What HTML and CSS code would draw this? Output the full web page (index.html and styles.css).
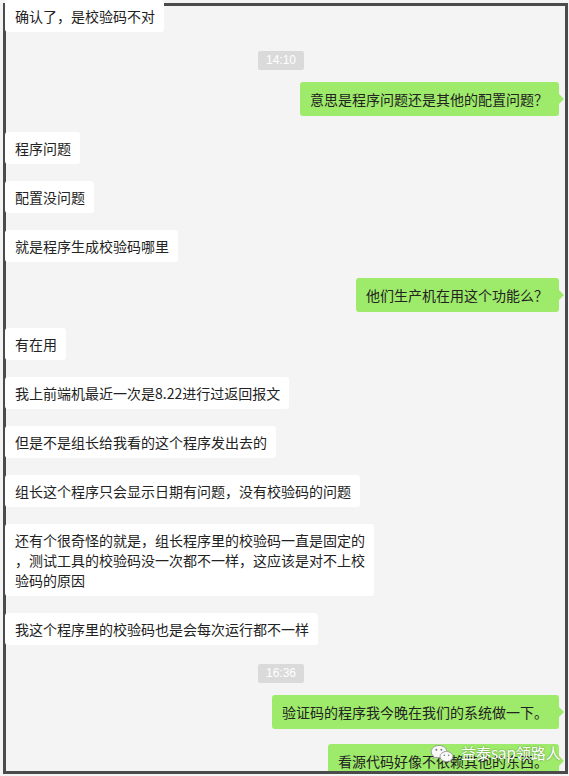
FILE: index.html
```html
<!DOCTYPE html>
<html lang="zh-CN">
<head>
    <meta charset="UTF-8">
    <meta name="viewport" content="width=device-width, initial-scale=1.0">
    <title>聊天记录</title>
    <link rel="stylesheet" href="styles.css">
</head>
<body>
    <div class="frame">
        <div class="messages">
            <div class="msg"><div class="bubble">确认了，是校验码不对</div></div>
            <div class="time"><span>14:10</span></div>
            <div class="msg me"><div class="bubble">意思是程序问题还是其他的配置问题？</div></div>
            <div class="msg"><div class="bubble">程序问题</div></div>
            <div class="msg"><div class="bubble">配置没问题</div></div>
            <div class="msg"><div class="bubble">就是程序生成校验码哪里</div></div>
            <div class="msg me"><div class="bubble">他们生产机在用这个功能么？</div></div>
            <div class="msg"><div class="bubble">有在用</div></div>
            <div class="msg"><div class="bubble">我上前端机最近一次是8.22进行过返回报文</div></div>
            <div class="msg"><div class="bubble">但是不是组长给我看的这个程序发出去的</div></div>
            <div class="msg"><div class="bubble">组长这个程序只会显示日期有问题，没有校验码的问题</div></div>
            <div class="msg"><div class="bubble">还有个很奇怪的就是，组长程序里的校验码一直是固定的<br>，测试工具的校验码没一次都不一样，这应该是对不上校<br>验码的原因</div></div>
            <div class="msg"><div class="bubble">我这个程序里的校验码也是会每次运行都不一样</div></div>
            <div class="time"><span>16:36</span></div>
            <div class="msg me"><div class="bubble">验证码的程序我今晚在我们的系统做一下。</div></div>
            <div class="msg me"><div class="bubble">看源代码好像不依赖其他的东西。</div></div>
        </div>

        <!-- watermark over the last message -->
        <div class="watermark">
            <svg width="24" height="18" viewBox="0 0 24 18">
                <path d="M9 1.5c-4.4 0-7.8 2.8-7.8 6.2 0 1.9 1 3.5 2.6 4.6l-.7 2.2 2.6-1.3c1 .3 2.1.5 3.3.5 4.4 0 7.8-2.8 7.8-6.1S13.4 1.5 9 1.5z" fill="#fafafa" stroke="#9a9a9a" stroke-width="1"/>
                <path d="M16.5 7.5c-3.6 0-6.4 2.3-6.4 5s2.8 5 6.4 5c.8 0 1.6-.1 2.3-.4l2 1-.5-1.7c1.5-.9 2.5-2.3 2.5-3.9 0-2.7-2.8-5-6.3-5z" fill="#fafafa" stroke="#9a9a9a" stroke-width="1"/>
                <circle cx="6.3" cy="5.8" r="1" fill="#777"/>
                <circle cx="11.4" cy="5.8" r="1" fill="#777"/>
                <circle cx="14.3" cy="11.3" r=".8" fill="#777"/>
                <circle cx="18.6" cy="11.3" r=".8" fill="#777"/>
            </svg>
            <span>益泰sap领路人</span>
        </div>
    </div>
</body>
</html>
```

FILE: styles.css
```css
body {
    margin: 0;
    padding: 3px 1px 0 3px;
    background: #f4f4f4;
    font-family: "Noto Sans CJK SC", "Liberation Sans", sans-serif;
    color: #222;
}
.frame {
    position: relative;
    box-sizing: border-box;
    width: 565px;
    height: 771px;
    border: 3px solid #4b4b4b;
    background: #f4f4f4;
}
.messages {
    margin: -6px 0 0 -1px;
    height: 771px;
    overflow: hidden;
}
.msg { display: flex; margin-top: 17px; }
.msg:first-child { margin-top: 0; }
.msg.me {
    justify-content: flex-end;
    padding-right: 6px;
    margin-top: 16px;
}
.me + .msg { margin-top: 16px; }
.me + .me { margin-top: 15px; }

.bubble {
    background: #fff;
    border-radius: 3px;
    padding: 6px 9px 6px 10px;
    font-size: 14px;
    line-height: 20px;
    white-space: nowrap;
}
.me .bubble {
    position: relative;
    background: #9eea6a;
    padding: 7px 11px 7px 10px;
}
.me .bubble::after {
    content: "";
    position: absolute;
    right: -5px;
    top: 12px;
    border-left: 5px solid #9eea6a;
    border-top: 5px solid transparent;
    border-bottom: 5px solid transparent;
}

.time {
    display: flex;
    justify-content: center;
    padding-right: 8px;
    margin: 19px 0 12px;
}
.time + .msg { margin-top: 0; }
.time span {
    background: #dadada;
    color: #fff;
    font-family: "Liberation Sans", sans-serif;
    font-size: 12px;
    line-height: 19px;
    padding: 0 8px;
    border-radius: 2px;
}

.watermark {
    position: absolute;
    left: 424px;
    top: 738px;
    display: flex;
    align-items: center;
    gap: 7px;
}
.watermark span {
    color: #fff;
    font-size: 15px;
    line-height: 18px;
    text-shadow: 0 0 2px rgba(0,0,0,0.45);
}
```
